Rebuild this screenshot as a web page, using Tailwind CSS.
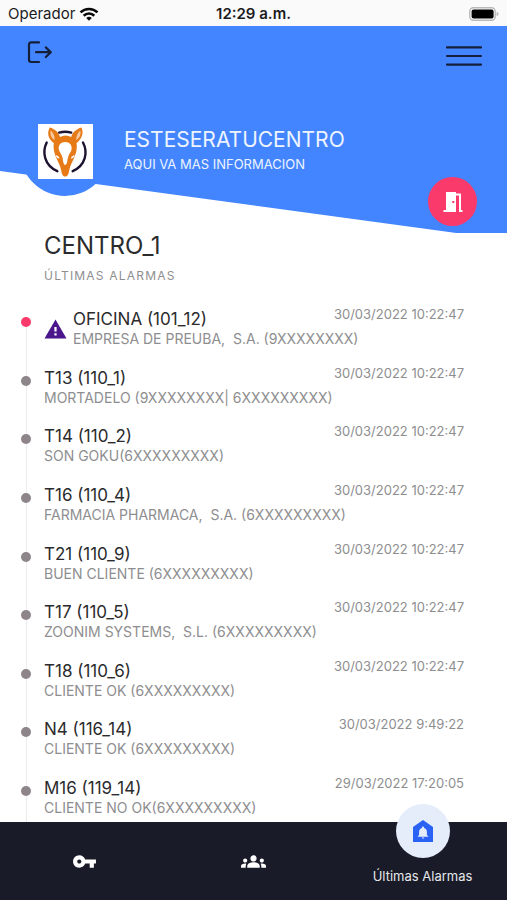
<!DOCTYPE html>
<html lang="es">
<head>
<meta charset="utf-8">
<meta name="viewport" content="width=device-width, initial-scale=1">
<title>Últimas Alarmas</title>
<script src="https://cdn.jsdelivr.net/npm/@tailwindcss/browser@4"></script>
</head>
<body class="flex min-h-screen flex-col bg-white font-['Inter',sans-serif] text-[#2b2b2d]">

<!-- Status bar -->
<div class="grid h-[26px] grid-cols-3 items-center bg-[#fafafa] px-2 pt-[2px] text-[15px] leading-5 text-[#1c1c1e]">
  <div class="flex items-center gap-1">
    <span>Operador</span>
    <svg class="h-[14px] w-[20px]" viewBox="0 0 20 14" fill="none" stroke="#0a0a0a" stroke-width="2.6" aria-hidden="true">
      <path d="M1.5 5.4a12.2 12.2 0 0 1 17 0"/>
      <path d="M4.7 8.7a7.6 7.6 0 0 1 10.6 0"/>
      <path d="M10 13.8 7.2 11a4 4 0 0 1 5.6 0z" fill="#0a0a0a" stroke="none"/>
    </svg>
  </div>
  <div class="text-center font-semibold">12:29 a.m.</div>
  <svg class="h-[14px] w-[30px] justify-self-end" viewBox="0 0 30 14" aria-hidden="true">
    <rect x=".8" y=".8" width="25.4" height="12.4" rx="3.6" fill="#fafafa" stroke="#b9b9bb" stroke-width="1.4"/>
    <rect x="2.6" y="2.4" width="22" height="9.2" rx="2" fill="#000"/>
    <path d="M27.6 4.8q2 .8 2 2.2t-2 2.2z" fill="#b9b9bb"/>
  </svg>
</div>

<!-- Header -->
<header class="relative flex h-[207px] flex-col">
  <div class="absolute inset-0 bg-[#4385fe] [clip-path:polygon(0_0,100%_0,100%_100%,90%_100%,0_70%)]"></div>
  <div class="relative flex items-start justify-between pr-6 pl-[26px] pt-[12px]">
    <button type="button" aria-label="Salir">
      <svg class="size-[28px]" viewBox="0 0 28 28" fill="none" stroke="#14203a" stroke-width="2.2" stroke-linecap="round" stroke-linejoin="round">
        <path d="M13 4.400H5.200q-2.200 0-2.200 2.200v15.200q0 2.200 2.200 2.200H13"/>
        <path d="M10 14.200h14.600M19.800 9.400l5 4.800-5 4.800"/>
      </svg>
    </button>
    <button type="button" aria-label="Menú" class="pt-[7px]">
      <svg class="h-[22px] w-[38px]" viewBox="0 0 38 22" stroke="#14203a" stroke-width="2.2" stroke-linecap="round">
        <path d="M2 2.400h34M2 11h34M2 19.600h34"/>
      </svg>
    </button>
  </div>
  <div class="relative mt-[39px] flex items-start gap-[14px] pl-5">
    <div class="flex size-[90px] items-center justify-center rounded-full bg-[#4385fe]">
      <svg class="size-[55px] bg-white" viewBox="0 0 55 55" role="img" aria-label="Logotipo del centro">
        <g fill="none" stroke="#1d1230" stroke-width="2.400" stroke-linecap="round">
          <path d="M21.200 8.600q6-1.700 12 0"/>
          <path d="M8.700 18.500C4 28 6 41 19.300 47.200"/>
          <path d="M45 18.500C50 28 48 41 34.700 47.200"/>
        </g>
        <path fill="#e67a17" d="M11.800 3.600C9.200 8 9.300 14.500 15.800 19c-.6 4-.1 9 2.200 14.200 2 4.500 4 7.500 5.200 13 .6 4.500 2 6.300 4 6.300s3.400-1.800 4-6.300c1.200-5.500 3.200-8.500 5.200-13 2.300-5.200 2.800-10.200 2.200-14.200 6-4.500 7.200-10.500 4.800-15.400-4.800 1.400-9 4.900-10.200 9.400-3.600-2-7.600-2-11.200 0C20.800 8.500 16.600 5 11.800 3.600z"/>
        <path fill="#f6c9a0" d="M12.800 6.400c-1 3.200.1 7.400 3.800 9.600.2-3.800-1-7.400-3.800-9.600zM42.200 6.400c1 3.200-.1 7.400-4 9.600 0-3.800 1.200-7.400 4-9.600z"/>
        <path fill="#fff" d="M27.200 18c-4.400 0-7 3.200-6.400 7.200.5 3.400 3 4.600 3.700 8.300.5 3.200 1 7.500 2.700 7.500s2.200-4.300 2.700-7.500c.7-3.700 3.200-4.900 3.700-8.300.6-4-2-7.200-6.400-7.200z"/>
        <path fill="#fff" d="M17.600 31.200q3 .2 4 3.200-3.400-.2-4-3.200zM36.800 31.200q-3 .2-4 3.200 3.400-.2 4-3.200z"/>
      </svg>
    </div>
    <div class="pt-[22px] text-[#eef4ff]">
      <h1 class="text-[21px] leading-6">ESTESERATUCENTRO</h1>
      <p class="text-[13px] leading-6">AQUI VA MAS INFORMACION</p>
    </div>
  </div>
  <button type="button" aria-label="Abrir puerta" class="absolute right-[30px] bottom-[7px] flex size-[49px] items-center justify-center rounded-full bg-[#fb3a6c]">
    <svg class="size-6" viewBox="0 0 24 24" fill="#fff">
      <path fill-rule="evenodd" d="M5 2h10v1.500h5V20h1.500v2H18V5.500h-3V22H2.500v-2H5zm6.300 9v2h2v-2z"/>
    </svg>
  </button>
</header>

<main class="flex flex-1 flex-col pr-[43px] pl-[21px]">
  <div class="pt-px pl-[23px]">
    <h2 class="text-2xl leading-6">CENTRO_1</h2>
    <p class="pt-[6px] text-xs leading-6 tracking-widest text-[#8e8e90]">ÚLTIMAS ALARMAS</p>
  </div>

  <div class="relative mt-[21px] flex flex-1 flex-col pb-1">
    <div class="absolute top-[13px] bottom-0 left-[5px] w-px bg-[#ececee]"></div>
    <ul class="relative flex flex-1 flex-col justify-between" id="alarms"></ul>
  </div>
</main>

<!-- Bottom navigation -->
<nav class="grid h-[78px] grid-cols-3 bg-[#191c28] text-white">
  <a href="#llaves" aria-label="Llaves" class="flex items-center justify-center">
    <svg class="size-[25px]" viewBox="0 0 24 24" fill="#fff"><path d="M12.650 10C11.830 7.670 9.610 6 7 6c-3.310 0-6 2.690-6 6s2.690 6 6 6c2.610 0 4.830-1.670 5.650-4H17v4h4v-4h2v-4H12.650zM7 14c-1.100 0-2-.9-2-2s.9-2 2-2 2 .9 2 2-.9 2-2 2z"/></svg>
  </a>
  <a href="#grupos" aria-label="Grupos" class="flex items-center justify-center">
    <svg class="size-[25px]" viewBox="0 0 24 24" fill="#fff"><path d="M12 12.750c1.630 0 3.070.39 4.240.9 1.080.48 1.760 1.560 1.760 2.730V18H6v-1.610c0-1.180.68-2.260 1.760-2.730 1.170-.52 2.610-.91 4.240-.91zM4 13c1.100 0 2-.9 2-2s-.9-2-2-2-2 .9-2 2 .9 2 2 2zm1.130 1.100C4.760 14.040 4.390 14 4 14c-.99 0-1.930.21-2.780.58C.480 14.900 0 15.620 0 16.430V18h4.500v-1.610c0-.83.230-1.610.630-2.290zM20 13c1.100 0 2-.9 2-2s-.9-2-2-2-2 .9-2 2 .9 2 2 2zm4 3.430c0-.81-.48-1.530-1.220-1.850-.85-.37-1.790-.58-2.780-.58-.39 0-.76.040-1.130.1.400.68.630 1.460.630 2.290V18H24v-1.570zM12 6c1.660 0 3 1.340 3 3s-1.340 3-3 3-3-1.340-3-3 1.340-3 3-3z"/></svg>
  </a>
  <a href="#alarmas" aria-current="page" class="-mt-[18px] flex flex-col items-center gap-[10px]">
    <span class="flex size-[54px] items-center justify-center rounded-full bg-[#e5ecfa]">
      <svg class="size-6" viewBox="0 0 24 24">
        <path d="M12 1 22 8v15H2V8z" fill="#2a62f5"/>
        <path d="M12 7.600c.6 0 1 .4 1 1v.3c1.900.5 2.900 2 2.900 4v3l1.300 1.300v.6H6.800v-.6l1.300-1.300v-3c0-2 1-3.500 2.900-4v-.3c0-.6.400-1 1-1zM10.800 18.400h2.400q0 1.200-1.200 1.200t-1.200-1.200z" fill="#e5ecfa"/>
      </svg>
    </span>
    <span class="text-[13px] leading-4 whitespace-nowrap text-[#e6e7ea]">Últimas Alarmas</span>
  </a>
</nav>

<template id="row">
  <li class="flex items-start">
    <span data-dot class="mt-2 mr-[13px] size-[10px] shrink-0 rounded-full bg-[#8d8589]"></span>
    <svg data-warn class="mt-[10px] mr-[6px] hidden h-[20px] w-[23px] shrink-0" viewBox="0 0 23 20" role="img" aria-label="Aviso">
      <path d="M11.500.5 22.500 19.500H.5z" fill="#4b168c"/>
      <path d="M10.400 8h2.200v4.500h-2.200zM10.400 14.200h2.200v2.300h-2.200z" fill="#fff"/>
    </svg>
    <div class="min-w-0 flex-1">
      <div class="flex items-start justify-between">
        <h3 data-name class="text-[17px] leading-5"></h3>
        <time data-time class="text-[13px] leading-[10px] text-[#8e8e90]"></time>
      </div>
      <p data-client class="text-sm leading-5 whitespace-pre text-[#8e8e90]"></p>
    </div>
  </li>
</template>

<script>
const alarms = [
  ["OFICINA (101_12)", "EMPRESA DE PREUBA,  S.A. (9XXXXXXXX)", "30/03/2022 10:22:47"],
  ["T13 (110_1)", "MORTADELO (9XXXXXXXX| 6XXXXXXXXX)", "30/03/2022 10:22:47"],
  ["T14 (110_2)", "SON GOKU(6XXXXXXXXX)", "30/03/2022 10:22:47"],
  ["T16 (110_4)", "FARMACIA PHARMACA,  S.A. (6XXXXXXXXX)", "30/03/2022 10:22:47"],
  ["T21 (110_9)", "BUEN CLIENTE (6XXXXXXXXX)", "30/03/2022 10:22:47"],
  ["T17 (110_5)", "ZOONIM SYSTEMS,  S.L. (6XXXXXXXXX)", "30/03/2022 10:22:47"],
  ["T18 (110_6)", "CLIENTE OK (6XXXXXXXXX)", "30/03/2022 10:22:47"],
  ["N4 (116_14)", "CLIENTE OK (6XXXXXXXXX)", "30/03/2022 9:49:22"],
  ["M16 (119_14)", "CLIENTE NO OK(6XXXXXXXXX)", "29/03/2022 17:20:05"]
];
const list = document.getElementById("alarms");
const row = document.getElementById("row");
alarms.forEach(([name, client, time], i) => {
  const item = row.content.cloneNode(true);
  item.querySelector("[data-name]").textContent = name;
  item.querySelector("[data-client]").textContent = client;
  item.querySelector("[data-time]").textContent = time;
  if (i === 0) {
    item.querySelector("[data-dot]").classList.replace("bg-[#8d8589]", "bg-[#fb3a6c]");
    item.querySelector("[data-warn]").classList.remove("hidden");
  }
  list.append(item);
});
</script>
</body>
</html>
